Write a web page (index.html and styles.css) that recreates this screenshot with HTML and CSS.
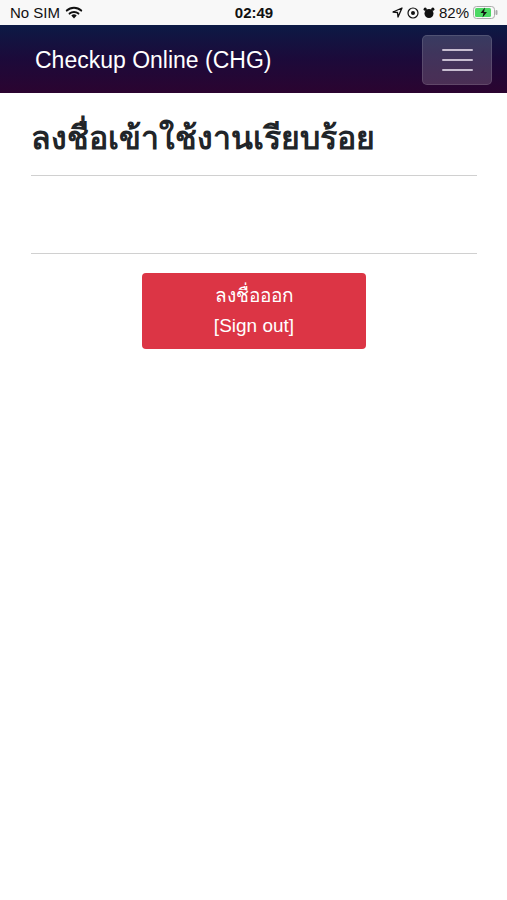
FILE: index.html
```html
<!DOCTYPE html>
<html lang="th">

<head>
  <meta charset="UTF-8" />
  <title>Checkup Online (CHG)</title>
  <meta name="viewport" content="width=device-width, initial-scale=1.0" />
  <link rel="stylesheet" href="styles.css">
</head>

<body>
  <div class="status-bar">
    <div class="sb-left">
      <span>No SIM</span>
      <svg class="wifi" width="18" height="13" viewBox="0 0 18 13">
        <path d="M9 12.5 L6.3 9.4 A4 4 0 0 1 11.7 9.4 Z" fill="#111" />
        <path d="M4.6 7.6 A6.5 6.5 0 0 1 13.4 7.6" stroke="#111" stroke-width="2" fill="none" stroke-linecap="round" />
        <path d="M1.8 4.6 A10.5 10.5 0 0 1 16.2 4.6" stroke="#111" stroke-width="2" fill="none" stroke-linecap="round" />
      </svg>
    </div>
    <div class="sb-time">02:49</div>
    <div class="sb-right">
      <svg width="11" height="11" viewBox="0 0 11 11">
        <path d="M10 1 L1 5 L5.5 5.5 L6 10 Z" fill="none" stroke="#111" stroke-width="1.3" stroke-linejoin="round" />
      </svg>
      <svg width="12" height="12" viewBox="0 0 12 12">
        <circle cx="6" cy="6" r="5" fill="none" stroke="#111" stroke-width="1.2" />
        <circle cx="6" cy="6" r="2" fill="#111" />
      </svg>
      <svg width="12" height="12" viewBox="0 0 12 12">
        <circle cx="6" cy="6.5" r="4.5" fill="#111" />
        <circle cx="2.2" cy="2.2" r="1.6" fill="#111" />
        <circle cx="9.8" cy="2.2" r="1.6" fill="#111" />
      </svg>
      <span>82%</span>
      <svg width="25" height="13" viewBox="0 0 25 13">
        <rect x="0.5" y="0.5" width="21" height="12" rx="3" fill="none" stroke="#aaa" />
        <rect x="2" y="2" width="16" height="9" rx="1.5" fill="#4cd964" />
        <rect x="22.5" y="4" width="2" height="5" rx="1" fill="#aaa" />
        <path d="M12 1.5 L7.5 7 L10.5 7 L9.5 11.5 L14 6 L11 6 Z" fill="#111" />
      </svg>
    </div>
  </div>

  <nav class="navbar">
    <span class="brand">Checkup Online (CHG)</span>
    <button class="toggler" aria-label="menu">
      <span></span><span></span><span></span>
    </button>
  </nav>

  <main class="content">
    <h2>ลงชื่อเข้าใช้งานเรียบร้อย</h2>
    <hr>
    <div class="spacer"></div>
    <hr>
    <div class="actions">
      <button class="btn-danger">ลงชื่อออก<br>[Sign out]</button>
    </div>
  </main>
</body>

</html>
```

FILE: styles.css
```css
body {
  margin: 0;
  background: #fff;
  font-family: 'Liberation Sans', 'Noto Sans', 'DejaVu Sans', sans-serif;
  color: #212529;
}

.status-bar {
  height: 25px;
  background: #f8f8f8;
  display: flex;
  align-items: center;
  justify-content: space-between;
  padding: 0 9px 0 10px;
  font-size: 15px;
  color: #111;
}

.sb-left,
.sb-right {
  display: flex;
  align-items: center;
  gap: 5px;
  width: 150px;
}

.sb-right {
  justify-content: flex-end;
  gap: 4px;
}

.sb-time {
  font-weight: 600;
}

.navbar {
  height: 68px;
  background: linear-gradient(180deg, #0c1a45 0%, #1c0a3a 50%, #2b0430 100%);
  display: flex;
  align-items: center;
  justify-content: space-between;
  padding: 0 15px 0 35px;
}

.brand {
  color: #fff;
  font-size: 23px;
  padding-top: 3px;
}

.toggler {
  width: 70px;
  height: 50px;
  margin-top: 2px;
  background: rgba(255, 255, 255, 0.17);
  border: 1px solid rgba(255, 255, 255, 0.12);
  border-radius: 5px;
  display: flex;
  flex-direction: column;
  align-items: center;
  justify-content: center;
  gap: 8px;
  padding: 0;
}

.toggler span {
  display: block;
  width: 31px;
  height: 2px;
  background: #c7bdd0;
  border-radius: 1px;
}

.content {
  padding: 0 30px 0 31px;
}

h2 {
  margin: 26px 0 0;
  font-size: 32px;
  font-weight: 700;
  line-height: 1.2;
}

hr {
  margin: 18px 0 0;
  border: 0;
  border-top: 1px solid #d0d0d0;
}

.spacer {
  height: 59px;
}

.actions {
  display: flex;
  justify-content: center;
  margin-top: 19px;
}

.btn-danger {
  width: 224px;
  height: 76px;
  background: #dc3545;
  color: #fff;
  border: none;
  border-radius: 4px;
  font-family: inherit;
  font-size: 19px;
  line-height: 30px;
  padding: 0;
}
```
